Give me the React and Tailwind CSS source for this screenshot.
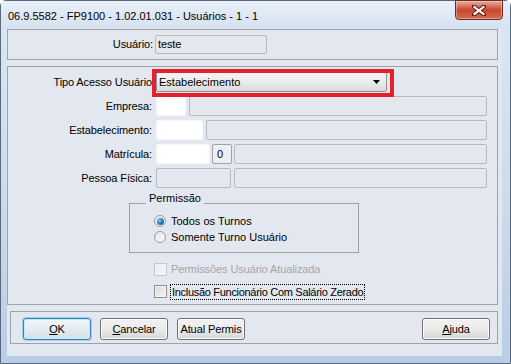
import React from "react";

const font = { fontFamily: '"Liberation Sans", Arial, sans-serif' };

function Label({ children }) {
  return (
    <div className="w-[144px] shrink-0 text-right pr-0 text-[11px] tracking-[-0.1px] text-black leading-none">
      {children}
    </div>
  );
}

function GrayBox({ w, children }) {
  return (
    <div
      className="h-[20px] shrink-0 rounded-[2px] border border-[#b4b8c0] bg-[#e4e7ee] text-[11px] leading-[18px] pl-[4px]"
      style={{ width: w }}
    >
      {children}
    </div>
  );
}

function WhiteBox({ w }) {
  return (
    <div
      className="h-[20px] shrink-0 rounded-[2px] border border-[#f4f5f8] bg-white"
      style={{ width: w }}
    />
  );
}

function Radio({ checked, label }) {
  return (
    <div className="flex items-center h-[16px]">
      <div className="ml-[24px] w-[12px] h-[12px] rounded-full border border-[#9a9ea6] bg-gradient-to-br from-[#e6e6e6] to-[#f8f8f8] flex items-center justify-center">
        {checked && (
          <div className="w-[7px] h-[7px] rounded-full bg-[radial-gradient(circle_at_35%_35%,#8cc8f4_0%,#2a7bc8_45%,#0d3f7a_100%)]" />
        )}
      </div>
      <span className="ml-[5px] text-[11px] tracking-[0px] leading-none">{label}</span>
    </div>
  );
}

function Button({ children, focused, w = 68 }) {
  return (
    <div
      className={
        "h-[22px] shrink-0 rounded-[3px] flex items-center justify-center text-[11px] tracking-[-0.1px] " +
        (focused
          ? "border border-[#3c7fb1] shadow-[0_0_0_1px_#9fd2f0,inset_0_0_0_1px_#c9e8f8] bg-gradient-to-b from-[#f2f6f9] to-[#d6e0e6]"
          : "border border-[#707070] shadow-[inset_0_0_0_1px_#fcfcfc] bg-gradient-to-b from-[#f2f2f2] via-[#ebebeb] to-[#d6d6d6]")
      }
      style={{ width: w }}
    >
      {children}
    </div>
  );
}

export default function App() {
  return (
    <div
      className="w-[511px] h-[364px] overflow-hidden bg-white"
      style={font}
    >
      <div className="relative w-[511px] h-[364px] rounded-t-[6px] border border-[#5a6a7c] bg-gradient-to-b from-[#dce7f4] via-[#cfdcec] to-[#b9cde6] flex flex-col">
        {/* Title bar */}
        <div className="h-[28px] shrink-0 flex items-center pl-[7px] bg-gradient-to-b from-[#e8eff8] to-[#d6e2f0]">
          <span className="text-[11px] text-black leading-none mt-[2px]">
            06.9.5582 - FP9100 - 1.02.01.031 - Usuários - 1 - 1
          </span>
        </div>
        {/* Close button */}
        <div className="absolute left-[454px] top-[-1px] w-[48px] h-[20px] rounded-b-[4px] border border-[#6b2a22] bg-gradient-to-b from-[#e9a99b] via-[#c8452f] to-[#d66a4b] shadow-[inset_0_0_0_1px_rgba(255,255,255,0.35)] flex items-center justify-center">
          <svg width="14" height="11" viewBox="0 0 14 11">
            <path d="M2 1.5 L12 9.5 M12 1.5 L2 9.5" stroke="#5a1d14" strokeWidth="4" strokeLinecap="square" />
            <path d="M2.5 2 L11.5 9 M11.5 2 L2.5 9" stroke="#ffffff" strokeWidth="2.2" strokeLinecap="square" />
          </svg>
        </div>

        {/* Client */}
        <div className="ml-[6px] mr-[8px] h-[327px] shrink-0 bg-[#e3e7ef] flex flex-col text-black">
          {/* Top panel */}
          <div className="h-[31px] mr-[4px] border border-[#a0a3a8] flex items-center">
            <div className="w-[145px] text-right text-[11px] tracking-[-0.1px] leading-none">Usuário:</div>
            <div className="ml-[2px] w-[112px] h-[19px] rounded-[2px] border border-[#b4b8c0] bg-[#e4e7ee] text-[11px] leading-[17px] pl-[2px] tracking-[-0.1px]">
              teste
            </div>
          </div>

          {/* Main panel */}
          <div className="relative mt-[6px] h-[239px] mr-[4px] border border-[#a0a3a8] pt-[5px] flex flex-col">
            {/* Tipo Acesso */}
            <div className="flex items-center h-[20px]">
              <Label>Tipo Acesso Usuário</Label>
              <div className="ml-[4px] w-[231px] h-[20px] rounded-[2px] border border-[#8e9196] bg-gradient-to-b from-[#f4f4f4] via-[#ececec] to-[#dadada] flex items-center pl-[2px] pr-[6px]">
                <span className="text-[11px] tracking-[0px] leading-none flex-1">Estabelecimento</span>
                <svg width="7" height="4" viewBox="0 0 7 4">
                  <path d="M0 0 H7 L3.5 4 Z" fill="#000" />
                </svg>
              </div>
            </div>
            {/* Red annotation */}
            <div className="absolute left-[144px] top-[2px] w-[242px] h-[28px] border-[4px] border-[#e3202b] pointer-events-none" />

            <div className="flex items-center h-[20px] mt-[4px]">
              <Label>Empresa:</Label>
              <div className="ml-[4px] flex gap-[3px]">
                <WhiteBox w={30} />
                <GrayBox w={298} />
              </div>
            </div>
            <div className="flex items-center h-[20px] mt-[4px]">
              <Label>Estabelecimento:</Label>
              <div className="ml-[4px] flex gap-[3px]">
                <WhiteBox w={47} />
                <GrayBox w={281} />
              </div>
            </div>
            <div className="flex items-center h-[20px] mt-[4px]">
              <Label>Matrícula:</Label>
              <div className="ml-[4px] flex">
                <WhiteBox w={54} />
                <div className="ml-[2px] w-[20px] h-[20px] rounded-[2px] border border-[#9fa3aa] bg-[#eceef2] text-[11px] leading-[18px] pl-[4px]">0</div>
                <div className="ml-[2px]">
                  <GrayBox w={253} />
                </div>
              </div>
            </div>
            <div className="flex items-center h-[20px] mt-[4px]">
              <Label>Pessoa Física:</Label>
              <div className="ml-[4px] flex gap-[3px]">
                <GrayBox w={75} />
                <GrayBox w={253} />
              </div>
            </div>

            {/* Permissão group */}
            <div className="relative ml-[121px] mt-[15px] w-[230px] h-[50px] border border-[#a0a3a8] pt-[9px]">
              <span className="absolute left-[16px] top-[-12px] px-[3px] bg-[#e3e7ef] text-[11px] tracking-[0px] leading-[12px]">
                Permissão
              </span>
              <Radio checked label="Todos os Turnos" />
              <Radio label="Somente Turno Usuário" />
            </div>

            {/* Checkboxes */}
            <div className="flex items-center h-[16px] mt-[8px] ml-[146px]">
              <div className="w-[13px] h-[13px] border border-[#c4c7cc] bg-gradient-to-br from-[#ececec] to-[#f7f7f7]" />
              <span className="ml-[4px] text-[11px] tracking-[-0.1px] leading-none text-[#a3a6ab]">
                Permissões Usuário Atualizada
              </span>
            </div>
            <div className="flex items-center h-[17px] mt-[6px] ml-[146px]">
              <div className="w-[13px] h-[13px] border border-[#8e8f8f] bg-gradient-to-br from-[#d8d8d8] to-[#f6f6f6] shadow-[inset_0_0_0_1px_#f4f4f4]" />
              <span className="ml-[3px] h-[16px] border border-dotted border-black px-[1px] text-[11px] tracking-[-0.3px] leading-[14px]">
                Inclusão Funcionário Com Salário Zerado
              </span>
            </div>
          </div>

          {/* Button panel */}
          <div className="mt-[6px] ml-[3px] mr-[4px] h-[33px] border border-[#a0a3a8] flex items-start pt-[6px] pl-[12px] pr-[7px]">
            <Button focused>
              <span><span className="underline">O</span>K</span>
            </Button>
            <div className="ml-[9px]">
              <Button>
                <span><span className="underline">C</span>ancelar</span>
              </Button>
            </div>
            <div className="ml-[9px]">
              <Button>Atual Permis</Button>
            </div>
            <div className="ml-auto">
              <Button>
                <span><span className="underline">A</span>juda</span>
              </Button>
            </div>
          </div>
        </div>
      </div>
    </div>
  );
}
